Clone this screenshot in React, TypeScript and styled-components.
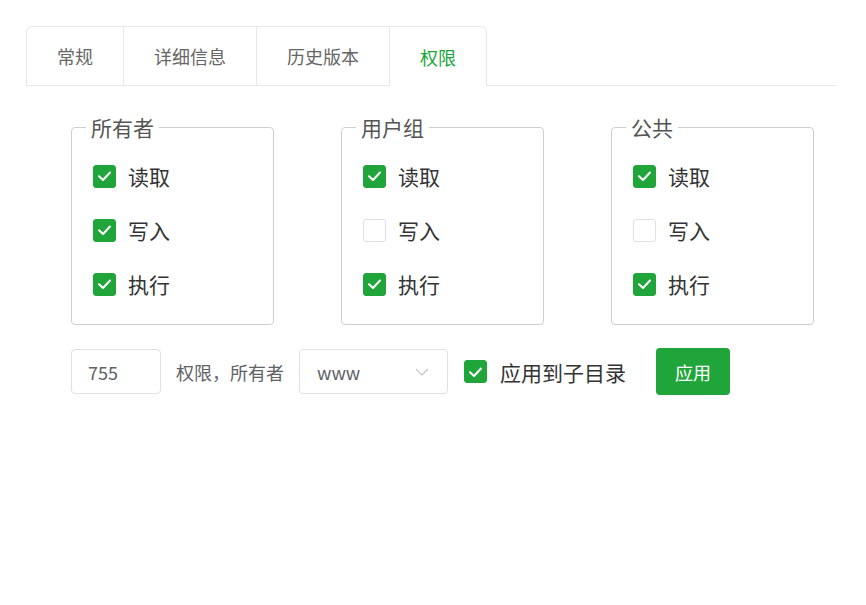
import React from "react";
import styled, { createGlobalStyle } from "styled-components";

const GREEN = "#20a53a";

const Global = createGlobalStyle`
  body {
    margin: 0;
    background: #fff;
    font-family: "Noto Sans CJK SC", "Noto Sans", sans-serif;
  }
`;

const Page = styled.div`
  padding: 26px 30px 0 26px;
`;

const TabBar = styled.div`
  display: flex;
  height: 59px;
  border-bottom: 1px solid #e4e7ed;
`;

const Tab = styled.div<{ active?: boolean; first?: boolean; last?: boolean }>`
  display: flex;
  align-items: center;
  padding: 0 30px;
  font-size: 18px;
  color: ${(p) => (p.active ? GREEN : "#666")};
  border-top: 1px solid #e4e7ed;
  border-right: 1px solid #e4e7ed;
  border-left: ${(p) => (p.first ? "1px solid #e4e7ed" : "none")};
  border-top-left-radius: ${(p) => (p.first ? "6px" : "0")};
  border-top-right-radius: ${(p) => (p.last ? "6px" : "0")};
  background: #fff;
  margin-bottom: ${(p) => (p.active ? "-1px" : "0")};
  cursor: pointer;
`;

const Body = styled.div`
  padding: 28px 0 0 45px;
`;

const Groups = styled.div`
  display: flex;
  gap: 67px;
`;

const Group = styled.fieldset`
  width: 203px;
  box-sizing: border-box;
  margin: 0;
  padding: 9px 20px 13px 21px;
  border: 1px solid #cfcfcf;
  border-radius: 4px;
  min-width: 0;
`;

const Legend = styled.legend`
  font-size: 21px;
  line-height: 26px;
  color: #555;
  padding: 0 5px;
  margin-left: -7px;
`;

const Row = styled.label`
  display: flex;
  align-items: center;
  height: 54px;
  gap: 12px;
  font-size: 21px;
  color: #333;
`;

const Box = styled.span<{ checked?: boolean }>`
  width: 23px;
  height: 23px;
  box-sizing: border-box;
  border-radius: 3px;
  display: flex;
  align-items: center;
  justify-content: center;
  flex-shrink: 0;
  background: ${(p) => (p.checked ? GREEN : "#fff")};
  border: 1px solid ${(p) => (p.checked ? GREEN : "#dcdfe6")};
`;

const Controls = styled.div`
  display: flex;
  align-items: center;
  margin-top: 23px;
`;

const NumberInput = styled.div`
  width: 90px;
  height: 45px;
  box-sizing: border-box;
  border: 1px solid #dcdfe6;
  border-radius: 4px;
  padding-left: 16px;
  display: flex;
  align-items: center;
  font-size: 18px;
  color: #606266;
`;

const Caption = styled.span`
  font-size: 18px;
  color: #606266;
  margin: 0 15px;
`;

const Select = styled.div`
  width: 149px;
  height: 45px;
  box-sizing: border-box;
  border: 1px solid #dcdfe6;
  border-radius: 4px;
  padding: 0 18px 0 17px;
  display: flex;
  align-items: center;
  justify-content: space-between;
  font-size: 18px;
  color: #606266;
`;

const SubDir = styled.label`
  display: flex;
  align-items: center;
  gap: 13px;
  margin-left: 16px;
  font-size: 21px;
  color: #333;
`;

const Button = styled.button`
  margin-left: 30px;
  width: 74px;
  height: 47px;
  border: none;
  border-radius: 4px;
  background: ${GREEN};
  color: #fff;
  font-family: inherit;
  font-size: 18px;
  cursor: pointer;
`;

const Check = ({ checked }: { checked?: boolean }) => (
  <Box checked={checked}>
    {checked && (
      <svg width="15" height="12" viewBox="0 0 15 12">
        <path d="M2 6.2 L6 10 L13 2.5" fill="none" stroke="#fff" strokeWidth="2" strokeLinecap="round" strokeLinejoin="round" />
      </svg>
    )}
  </Box>
);

const groups = [
  { title: "所有者", perms: [true, true, true] },
  { title: "用户组", perms: [true, false, true] },
  { title: "公共", perms: [true, false, true] },
];
const names = ["读取", "写入", "执行"];
const tabs = ["常规", "详细信息", "历史版本", "权限"];

export default function App() {
  return (
    <Page>
      <Global />
      <TabBar>
        {tabs.map((t, i) => (
          <Tab key={t} first={i === 0} last={i === tabs.length - 1} active={i === 3}>
            {t}
          </Tab>
        ))}
      </TabBar>
      <Body>
        <Groups>
          {groups.map((g) => (
            <Group key={g.title}>
              <Legend>{g.title}</Legend>
              {names.map((n, i) => (
                <Row key={n}>
                  <Check checked={g.perms[i]} />
                  {n}
                </Row>
              ))}
            </Group>
          ))}
        </Groups>
        <Controls>
          <NumberInput>755</NumberInput>
          <Caption>权限，所有者</Caption>
          <Select>
            www
            <svg width="14" height="8" viewBox="0 0 14 8">
              <path d="M1 1 L7 7 L13 1" fill="none" stroke="#c0c4cc" strokeWidth="1.2" />
            </svg>
          </Select>
          <SubDir>
            <Check checked />
            应用到子目录
          </SubDir>
          <Button>应用</Button>
        </Controls>
      </Body>
    </Page>
  );
}
